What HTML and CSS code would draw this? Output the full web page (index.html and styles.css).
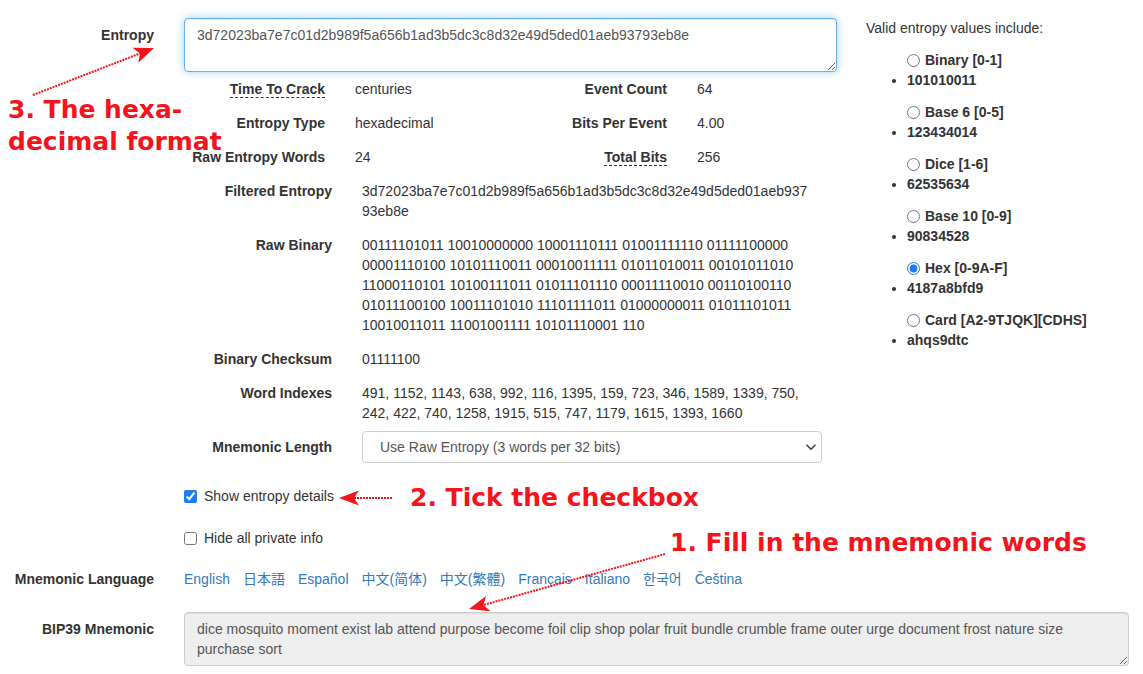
FILE: index.html
```html
<!DOCTYPE html>
<html lang="en">
<head>
<meta charset="utf-8">
<title>BIP39 Entropy</title>
<link rel="stylesheet" href="styles.css">
</head>
<body>
<div class="page">
  <div class="top">
    <div class="main">
      <div class="row">
        <label class="lbl lbl-field">Entropy</label>
        <div class="field">
          <textarea class="entropy">3d72023ba7e7c01d2b989f5a656b1ad3b5dc3c8d32e49d5ded01aeb93793eb8e</textarea>
          <div class="details">
            <div class="stats">
              <div class="k"><span class="tip">Time To Crack</span></div>
              <div class="v">centuries</div>
              <div class="k">Event Count</div>
              <div class="v">64</div>
              <div class="k">Entropy Type</div>
              <div class="v">hexadecimal</div>
              <div class="k">Bits Per Event</div>
              <div class="v">4.00</div>
              <div class="k">Raw Entropy Words</div>
              <div class="v">24</div>
              <div class="k"><span class="tip">Total Bits</span></div>
              <div class="v">256</div>
            </div>
            <div class="drow">
              <div class="k">Filtered Entropy</div>
              <div class="v break">3d72023ba7e7c01d2b989f5a656b1ad3b5dc3c8d32e49d5ded01aeb93793eb8e</div>
            </div>
            <div class="drow">
              <div class="k">Raw Binary</div>
              <div class="v">00111101011 10010000000 10001110111 01001111110 01111100000 00001110100 10101110011 00010011111 01011010011 00101011010 11000110101 10100111011 01011101110 00011110010 00110100110 01011100100 10011101010 11101111011 01000000011 01011101011 10010011011 11001001111 10101110001 110</div>
            </div>
            <div class="drow">
              <div class="k">Binary Checksum</div>
              <div class="v">01111100</div>
            </div>
            <div class="drow">
              <div class="k">Word Indexes</div>
              <div class="v">491, 1152, 1143, 638, 992, 116, 1395, 159, 723, 346, 1589, 1339, 750, 242, 422, 740, 1258, 1915, 515, 747, 1179, 1615, 1393, 1660</div>
            </div>
            <div class="drow len-row">
              <div class="k">Mnemonic Length</div>
              <div class="select-wrap">
                <select class="select">
                  <option>Use Raw Entropy (3 words per 32 bits)</option>
                </select>
                <svg class="chev" width="10" height="7" viewBox="0 0 10 7"><path d="M1 1.2 L5 5.2 L9 1.2" fill="none" stroke="#444" stroke-width="1.6" stroke-linecap="round" stroke-linejoin="round"/></svg>
              </div>
            </div>
          </div>
          <label class="check first"><input type="checkbox" checked> Show entropy details</label>
          <label class="check second"><input type="checkbox"> Hide all private info</label>
        </div>
      </div>
    </div>
    <aside class="side">
      <p class="side-title">Valid entropy values include:</p>
      <div class="opt"><label class="radio"><input type="radio" name="et"> Binary [0-1]</label><ul><li>101010011</li></ul></div>
      <div class="opt"><label class="radio"><input type="radio" name="et"> Base 6 [0-5]</label><ul><li>123434014</li></ul></div>
      <div class="opt"><label class="radio"><input type="radio" name="et"> Dice [1-6]</label><ul><li>62535634</li></ul></div>
      <div class="opt"><label class="radio"><input type="radio" name="et"> Base 10 [0-9]</label><ul><li>90834528</li></ul></div>
      <div class="opt"><label class="radio"><input type="radio" name="et" checked> Hex [0-9A-F]</label><ul><li>4187a8bfd9</li></ul></div>
      <div class="opt"><label class="radio"><input type="radio" name="et"> Card [A2-9TJQK][CDHS]</label><ul><li>ahqs9dtc</li></ul></div>
    </aside>
  </div>

  <div class="row wide lang-row">
    <label class="lbl">Mnemonic Language</label>
    <div class="links">
      <a href="#">English</a>
      <a href="#">日本語</a>
      <a href="#">Español</a>
      <a href="#">中文(简体)</a>
      <a href="#">中文(繁體)</a>
      <a href="#">Français</a>
      <a href="#">Italiano</a>
      <a href="#">한국어</a>
      <a href="#">Čeština</a>
    </div>
  </div>

  <div class="row wide phrase-row">
    <label class="lbl lbl-field">BIP39 Mnemonic</label>
    <textarea class="phrase" readonly>dice mosquito moment exist lab attend purpose become foil clip shop polar fruit bundle crumble frame outer urge document frost nature size purchase sort</textarea>
  </div>

  <div class="note note3">3. The hexa-<br>decimal format</div>
  <div class="note note2">2. Tick the checkbox</div>
  <div class="note note1">1. Fill in the mnemonic words</div>

  <svg class="arrows" width="1143" height="674" viewBox="0 0 1143 674">
    <g stroke="#f5141b" stroke-width="2" stroke-dasharray="2 1" fill="none" stroke-linecap="butt">
      <line x1="33" y1="95" x2="140" y2="53.4"/>
      <line x1="392" y1="498" x2="354" y2="498"/>
      <line x1="665" y1="554" x2="483.4" y2="605"/>
    </g>
    <g fill="#f5141b">
      <polygon points="154,48 138.3,62.7 140,53.4 132.5,47.7"/>
      <polygon points="339,498 359,490.5 354,498 359,505.5"/>
      <polygon points="469,609 486.1,595.9 483.4,605 490.5,611.3"/>
    </g>
  </svg>
</div>
</body>
</html>
```

FILE: styles.css
```css
body {
  margin: 0;
  font-family: "Liberation Sans", Arial, sans-serif;
  font-size: 14px;
  line-height: 20px;
  color: #333;
  background: #fff;
}

.page {
  position: relative;
  width: 1143px;
  height: 674px;
  padding-top: 18px;
  box-sizing: border-box;
  overflow: hidden;
}

.top {
  display: flex;
  align-items: flex-start;
}

.main {
  width: 837px;
}

.row {
  display: grid;
  grid-template-columns: 154px 653px;
  column-gap: 30px;
}

.row.wide {
  grid-template-columns: 154px 945px;
}

.lbl {
  font-weight: bold;
  text-align: right;
  white-space: nowrap;
}

.lbl-field {
  padding-top: 7px;
}

.entropy,
.phrase {
  display: block;
  box-sizing: border-box;
  height: 54px;
  padding: 6px 12px;
  border-radius: 4px;
  font-family: "Liberation Sans", Arial, sans-serif;
  font-size: 14px;
  line-height: 20px;
  color: #555;
  resize: vertical;
  outline: none;
  margin: 0;
}

.entropy {
  width: 653px;
  border: 1px solid #66afe9;
  box-shadow: inset 0 1px 1px rgba(0, 0, 0, .075), 0 0 8px rgba(102, 175, 233, .6);
  background: #fff;
}

.phrase {
  width: 945px;
  border: 1px solid #ccc;
  background: #eee;
  box-shadow: inset 0 1px 1px rgba(0, 0, 0, .075);
}

.details {
  margin-top: 7px;
  display: flex;
  flex-direction: column;
  gap: 14px;
}

.stats {
  display: grid;
  grid-template-columns: 141px 171px 171px 141px;
  row-gap: 14px;
}

.stats .k,
.drow .k {
  font-weight: bold;
  text-align: right;
  white-space: nowrap;
}

.stats .v {
  padding-left: 30px;
}

.tip {
  border-bottom: 1px dashed #333;
}

.drow {
  display: grid;
  grid-template-columns: 148px 460px;
  column-gap: 30px;
}

.drow .break {
  word-break: break-all;
  width: 449px;
}

.len-row {
  margin-top: -6px;
  align-items: center;
}

.select-wrap {
  position: relative;
  height: 32px;
}

.select {
  appearance: none;
  -webkit-appearance: none;
  width: 460px;
  height: 32px;
  box-sizing: border-box;
  border: 1px solid #ccc;
  border-radius: 4px;
  background: #fff;
  padding: 0 30px 0 17px;
  font-family: "Liberation Sans", Arial, sans-serif;
  font-size: 14px;
  color: #555;
  margin: 0;
}

.chev {
  position: absolute;
  right: 6px;
  top: 13px;
  pointer-events: none;
}

.check {
  display: flex;
  align-items: center;
  gap: 7px;
  width: max-content;
}

.check input {
  margin: 0;
  width: 13px;
  height: 13px;
  accent-color: #1f7cf4;
}

.check.first {
  margin-top: 23px;
}

.check.second {
  margin-top: 22px;
}

.side {
  margin-left: 29px;
  width: 277px;
}

.side-title {
  margin: 0 0 12px;
}

.opt {
  margin-bottom: 12px;
  font-weight: bold;
}

.radio {
  display: flex;
  align-items: center;
  gap: 5px;
  padding-left: 41px;
}

.radio input {
  margin: 0;
  width: 13px;
  height: 13px;
  accent-color: #1f7cf4;
}

.opt ul {
  margin: 0;
  padding-left: 41px;
}

.lang-row {
  margin-top: 21px;
}

.links {
  display: flex;
  gap: 13px;
  font-family: "Liberation Sans", "Noto Sans CJK JP", "Noto Sans CJK KR", sans-serif;
}

.links a {
  color: #337ab7;
  text-decoration: none;
}

.phrase-row {
  margin-top: 23px;
}

.note {
  position: absolute;
  font-family: "DejaVu Sans", Verdana, sans-serif;
  font-weight: bold;
  font-size: 25px;
  line-height: 32px;
  color: #f5141b;
  white-space: nowrap;
}

.note3 {
  left: 8px;
  top: 94px;
}

.note2 {
  left: 410px;
  top: 482px;
}

.note1 {
  left: 670px;
  top: 527px;
}

.arrows {
  position: absolute;
  left: 0;
  top: 0;
  pointer-events: none;
}
```
